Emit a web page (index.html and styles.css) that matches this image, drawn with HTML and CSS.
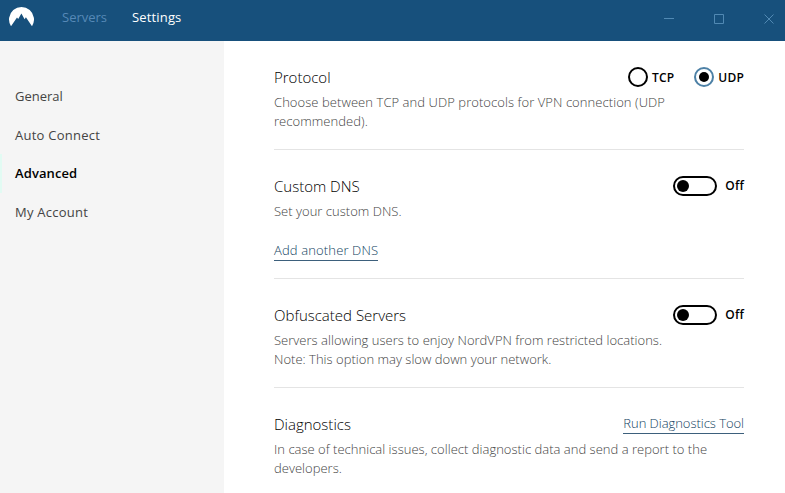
FILE: index.html
```html
<!DOCTYPE html>
<html lang="en">
<head>
    <meta charset="utf-8">
    <title>NordVPN Settings</title>
    <link rel="stylesheet" href="styles.css">
</head>
<body>
    <header class="titlebar">
        <svg class="logo" width="26" height="22" viewBox="0 0 26 22">
            <path d="M3 21.2 A12.5 12.5 0 1 1 24 21.2 L17.9 12.2 L16.6 14.2 L13.4 8.4 L10.2 14 L9 12.4 Z" fill="#fff"/>
        </svg>
        <nav class="tabs">
            <a class="tab">Servers</a>
            <a class="tab active">Settings</a>
        </nav>
        <div class="window-buttons">
            <svg width="12" height="12" viewBox="0 0 12 12"><path d="M1 5.5h10"/></svg>
            <svg width="12" height="12" viewBox="0 0 12 12"><path d="M1.5 1.5h9v9h-9z"/></svg>
            <svg width="12" height="12" viewBox="0 0 12 12"><path d="M1.5 1.5l9 9M10.5 1.5l-9 9"/></svg>
        </div>
    </header>
    <div class="main">
        <aside class="sidebar">
            <a class="item general">General</a>
            <a class="item">Auto Connect</a>
            <a class="item active">Advanced</a>
            <a class="item">My Account</a>
        </aside>
        <div class="content">
            <section class="setting protocol">
                <div class="row">
                    <h2>Protocol</h2>
                    <div class="radios">
                        <label class="radio"><span class="circle"></span><span>TCP</span></label>
                        <label class="radio checked"><span class="circle"></span><span>UDP</span></label>
                    </div>
                </div>
                <p>Choose between TCP and UDP protocols for VPN connection (UDP<br>recommended).</p>
            </section>
            <section class="setting dns">
                <div class="row">
                    <h2>Custom DNS</h2>
                    <div class="toggle"><span class="switch"></span><span>Off</span></div>
                </div>
                <p>Set your custom DNS.</p>
                <a class="link add">Add another DNS</a>
            </section>
            <section class="setting">
                <div class="row">
                    <h2>Obfuscated Servers</h2>
                    <div class="toggle"><span class="switch"></span><span>Off</span></div>
                </div>
                <p>Servers allowing users to enjoy NordVPN from restricted locations.<br>Note: This option may slow down your network.</p>
            </section>
            <section class="setting">
                <div class="row">
                    <h2>Diagnostics</h2>
                    <a class="link">Run Diagnostics Tool</a>
                </div>
                <p>In case of technical issues, collect diagnostic data and send a report to the<br>developers.</p>
            </section>
        </div>
    </div>
</body>
</html>
```
FILE: styles.css
```css
* { box-sizing: border-box; }
body {
    margin: 0;
    height: 493px;
    overflow: hidden;
    background: #fff;
    color: #000;
    font-family: "Open Sans", "Noto Sans", sans-serif;
    font-size: 13px;
}

.titlebar { display: flex; height: 41px; padding-left: 8px; background: #17507c; }
.logo { margin-top: 5px; }
.tabs { display: flex; gap: 25px; margin-left: 28px; line-height: 34px; }
.tab { color: #5689b7; }
.tab.active { color: #fff; font-weight: 500; letter-spacing: 0.15px; }
.window-buttons { display: flex; gap: 38px; margin: 13px 10px 0 auto; }
.window-buttons svg { fill: none; stroke: #5189b3; stroke-width: 1; }

.main { display: flex; height: 452px; }
.sidebar { width: 224px; padding-top: 36px; background: #f5f5f5; }
.item { display: block; height: 38.6px; padding-left: 15px; line-height: 38.6px; letter-spacing: 0.25px; color: #444; }
.item.general { letter-spacing: 0; }
.item.active { color: #000; font-weight: 600; letter-spacing: 0.1px; box-shadow: inset 2px 0 #e2fbf3; }

.content { width: 470px; margin-left: 50px; }
.setting { height: 109px; padding-top: 26px; border-bottom: 1px solid #e4e4e4; }
.setting.dns { height: 129px; }
.setting:last-child { border: 0; }
.row { display: flex; justify-content: space-between; height: 26px; }
h2 { margin: 0; font-size: 15px; font-weight: 300; line-height: 20px; color: #000; }
p { margin: 0; font-weight: 300; line-height: 19px; letter-spacing: 0.02px; color: #444; white-space: nowrap; }
.protocol p { letter-spacing: 0.065px; }
.link { display: inline-block; height: 20px; border-bottom: 1px solid #3d607c; line-height: 19px; font-weight: 300; letter-spacing: -0.04px; color: #123f61; }
.link.add { margin-top: 20px; letter-spacing: 0.14px; }

.radios { display: flex; gap: 20px; }
.radio, .toggle { display: flex; align-items: center; height: 20px; font-size: 12px; font-weight: 600; letter-spacing: 0.2px; }
.radio { gap: 4px; }
.circle { display: flex; align-items: center; justify-content: center; width: 20px; height: 20px; border: 2px solid #000; border-radius: 50%; }
.checked .circle { border-color: #4d81a6; }
.checked .circle::after { content: ""; width: 10px; height: 10px; border-radius: 50%; background: #000; }
.toggle { gap: 8px; line-height: 18px; }
.switch { width: 44px; height: 20px; padding: 2px; border: 2px solid #000; border-radius: 10px; }
.switch::after { content: ""; display: block; width: 12px; height: 12px; border-radius: 50%; background: #000; }
```
